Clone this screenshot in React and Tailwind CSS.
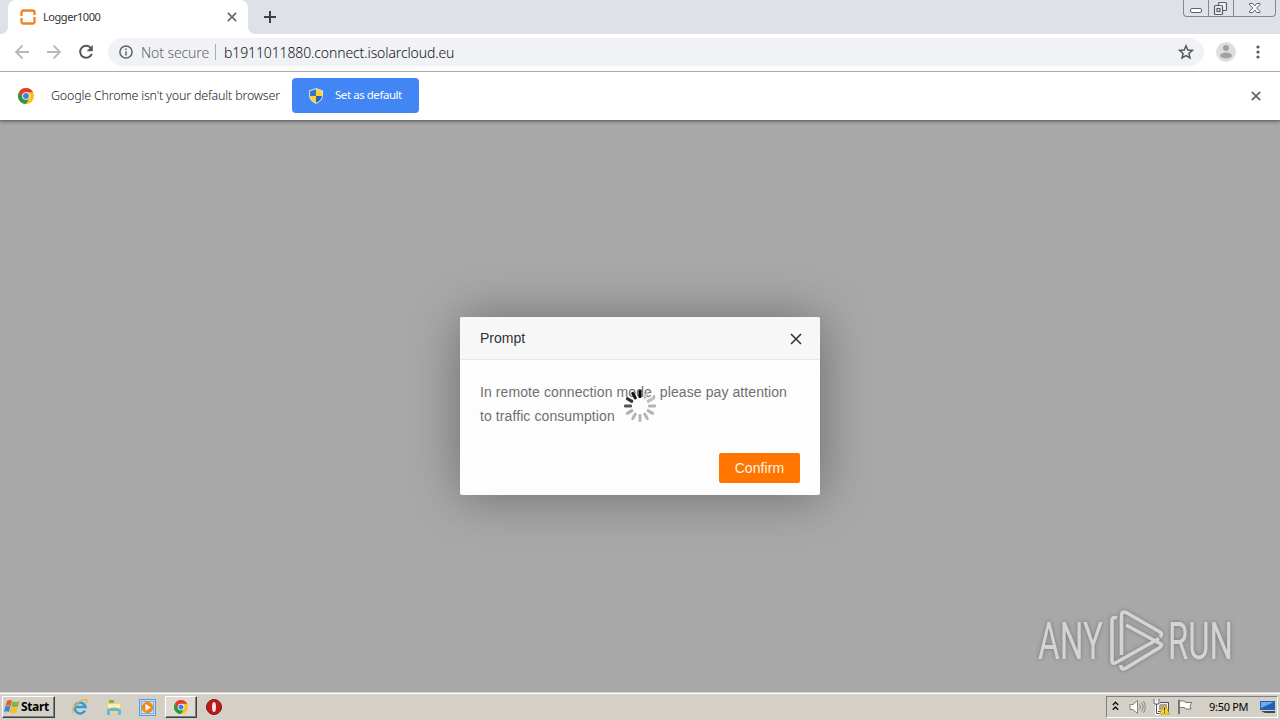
const BLADES = [
  "#050505",
  "#c9c9c9",
  "#bfbfbf",
  "#b4b4b4",
  "#b4b4b4",
  "#b4b4b4",
  "#b4b4b4",
  "#b4b4b4",
  "#b0b0b0",
  "#555555",
  "#303030",
  "#141414",
];

const ChromeLogo = ({ className = "" }) => (
  <svg viewBox="0 0 48 48" className={className}>
    <circle cx="24" cy="24" r="24" fill="#fbc116" />
    <path d="M3.200 12 A24 24 0 0 0 24 48 L34 29 L15 29Z" fill="#249a41" />
    <path d="M3.200 12 L14 30 L24 13 L45 13 A24 24 0 0 0 3.200 12Z" fill="#e33b2e" />
    <circle cx="24" cy="24" r="11.500" fill="#fff" />
    <circle cx="24" cy="24" r="8.800" fill="#3f7fe8" />
  </svg>
);

const Cross = ({ className = "", width = 2 }) => (
  <svg viewBox="0 0 12 12" fill="none" stroke="currentColor" strokeWidth={width} className={className}>
    <path d="M1 1 11 11M11 1 1 11" />
  </svg>
);

const WindowButtons = () => (
  <div className="ml-auto mr-[4px] flex h-[17px] w-[93px] rounded-b-[4px] border border-t-0 border-[#838892] bg-[#dfe2e8] text-[#5b6069]">
    <div className="w-[25px] border-r border-[#838892]">
      <svg width="24" height="16" fill="#fff" stroke="currentColor">
        <rect x="6.5" y="8.5" width="11" height="4" rx="1.5" />
      </svg>
    </div>
    <div className="w-[25px] border-r border-[#838892]">
      <svg width="24" height="16" fill="#eef0f4" stroke="currentColor" strokeWidth="1.2">
        <rect x="9.5" y="2.5" width="8" height="8" rx="1" />
        <rect x="5.5" y="5.5" width="8" height="9" rx="1" />
        <rect x="8" y="8.5" width="3" height="3" />
      </svg>
    </div>
    <svg width="41" height="16" fill="#fff" stroke="currentColor">
      <path d="M15.5 3.5h3.2l2 2.500 2-2.500h3.2v1.200L22.600 8l3.300 3.300v1.200h-3.200l-2-2.500-2 2.500h-3.200v-1.200L18.800 8l-3.300-3.300z" />
    </svg>
  </div>
);

const TabStrip = () => (
  <div className="flex h-[34px] shrink-0 items-start bg-[#dee1e6]">
    <div className="flex h-[34px] w-[8px] items-end bg-white">
      <div className="h-full w-full rounded-br-[7px] bg-[#dee1e6]" />
    </div>
    <div className="flex h-[34px] w-[240px] items-center rounded-t-[8px] bg-white pl-[12px]">
      <svg width="16" height="16" viewBox="0 0 16 16" fill="none" stroke="#ee8424" strokeWidth="2.3">
        <path d="M1.500 7V3.500Q1.500 1.500 3.500 1.500H12.500Q14.500 1.500 14.500 3.500V6" />
        <path d="M14.500 8V12.500Q14.500 14.500 12.500 14.500H3.500Q1.500 14.500 1.500 12.500V9" />
      </svg>
      <span className="ml-[7px] w-[184px] text-[11px] tracking-[-0.45px] text-[#303236]">Logger1000</span>
      <Cross className="h-[10px] w-[10px] text-[#66696d]" />
    </div>
    <div className="h-[34px] w-[8px] bg-white">
      <div className="h-full w-full rounded-bl-[7px] bg-[#dee1e6]" />
    </div>
    <svg width="12" height="12" viewBox="0 0 12 12" stroke="#3c4043" strokeWidth="2" className="mt-[11px] ml-[8px]">
      <path d="M6 0v12M0 6h12" />
    </svg>
    <WindowButtons />
  </div>
);

const Toolbar = () => (
  <div className="flex h-[38px] shrink-0 items-center border-b border-[#b5b6b8] bg-white pb-[1px] pl-[14px]">
    <svg width="16" height="16" viewBox="0 0 16 16" fill="none" stroke="#b7b9bc" strokeWidth="1.8">
      <path d="M15 8H2M8.500 1.500 2 8l6.500 6.500" />
    </svg>
    <svg width="16" height="16" viewBox="0 0 16 16" fill="none" stroke="#b7b9bc" strokeWidth="1.8" className="ml-[16px]">
      <path d="M1 8h13M7.500 1.500 14 8l-6.500 6.500" />
    </svg>
    <svg width="16" height="16" viewBox="0 0 16 16" fill="none" stroke="#55585c" strokeWidth="2" className="ml-[16px]">
      <path d="M13 4.200A6 6 0 1 0 13.800 9.800" />
      <path d="M14.800 1v6.200H8.600z" fill="#55585c" stroke="none" />
    </svg>
    <div className="ml-[14px] flex h-[28px] w-[1096px] items-center rounded-full bg-[#f0f2f5] pl-[11px]">
      <svg width="14" height="14" viewBox="0 0 14 14" fill="none" stroke="#5f6368" strokeWidth="1.500">
        <circle cx="7" cy="7" r="6.100" />
        <path d="M7 6.200V10.500M7 3.500V5" />
      </svg>
      <span className="ml-[8px] w-[67px] text-[14px] font-light tracking-[-0.1px] whitespace-nowrap text-[#5f6368]">
        Not secure
      </span>
      <span className="ml-[7px] h-[16px] w-px bg-[#a8abaf]" />
      <span className="ml-[8px] text-[14px] font-light tracking-[-0.12px] whitespace-nowrap text-[#101114]">
        b1911011880.connect.isolarcloud.eu
      </span>
      <svg width="16" height="16" viewBox="0 0 16 16" fill="none" stroke="#55595e" strokeWidth="1.500" className="mr-[10px] ml-auto">
        <path d="m8 1.800 1.800 4.200 4.600.4-3.500 3 1.100 4.500L8 11.500l-4 2.400 1.100-4.500-3.500-3 4.600-.4z" />
      </svg>
    </div>
    <svg width="20" height="20" viewBox="0 0 20 20" className="ml-[12px]">
      <circle cx="10" cy="10" r="10" fill="#dedede" />
      <circle cx="10" cy="6" r="3" fill="#a2a2a2" />
      <ellipse cx="10" cy="13.500" rx="6" ry="3" fill="#a2a2a2" />
    </svg>
    <svg width="4" height="14" viewBox="0 0 4 14" fill="#55585c" className="ml-[20px]">
      <circle cx="2" cy="2" r="1.600" />
      <circle cx="2" cy="7" r="1.600" />
      <circle cx="2" cy="12" r="1.600" />
    </svg>
  </div>
);

const DefaultBrowserBar = () => (
  <div className="relative flex h-[49px] shrink-0 items-center border-b border-[#707070] bg-white pl-[18px] shadow-[0_1px_3px_rgba(0,0,0,0.35)]">
    <ChromeLogo className="h-[16px] w-[16px]" />
    <span className="ml-[17px] w-[229px] text-[12.5px] font-light tracking-[-0.2px] whitespace-nowrap text-[#18191c]">
      Google Chrome isn't your default browser
    </span>
    <button className="mb-[1px] ml-[12px] flex h-[35px] w-[127px] items-center rounded-[4px] bg-[#4285f4] pl-[17px] text-white">
      <svg width="14" height="16" viewBox="0 0 14 16">
        <path d="M7 0 14 2.500V7Q14 13 7 16 0 13 0 7V2.500Z" fill="#d9dde0" />
        <path d="M7 1.200V8H1V3.300Z" fill="#3476c8" />
        <path d="M7 1.200V8H13V3.300Z" fill="#ffd22e" />
        <path d="M1 8H7V14.800Q1.500 12.500 1 8Z" fill="#ffd22e" />
        <path d="M13 8H7V14.800Q12.500 12.500 13 8Z" fill="#2866b5" />
      </svg>
      <span className="mb-[1px] ml-[12px] text-[11.5px] tracking-[-0.45px] whitespace-nowrap">Set as default</span>
    </button>
    <Cross className="mr-[19px] ml-auto h-[10px] w-[10px] text-[#66696d]" width={2.200} />
  </div>
);

const Spinner = () => (
  <svg viewBox="-16 -16 32 32" className="absolute top-[73px] left-[164px] h-[32px] w-[32px]">
    {BLADES.map((color, i) => (
      <rect key={i} x="-1.500" y="-16" width="3" height="8" rx="1.300" fill={color} transform={`rotate(${i * 30})`} />
    ))}
  </svg>
);

const PromptDialog = () => (
  <div className="relative mt-[196px] flex h-[178px] w-[360px] flex-col rounded-[2px] bg-[#fdfdfd] font-['Liberation_Sans',Arial,sans-serif] shadow-[1px_1px_50px_rgba(0,0,0,0.36)]">
    <div className="flex h-[43px] items-center justify-between rounded-t-[2px] border-b border-[#e9e9e9] bg-[#f7f7f7] pr-[18px] pl-[20px]">
      <h2 className="text-[14px] text-[#333]">Prompt</h2>
      <Cross className="mt-[1px] h-[12px] w-[12px] text-[#303030]" width={1.500} />
    </div>
    <p className="px-[20px] pt-[20px] text-[14px] leading-[24px] tracking-[0.09px] whitespace-nowrap text-[#6f6f6f]">
      In remote connection mode, please pay attention
      <br />
      to traffic consumption
    </p>
    <button className="mt-auto mr-[20px] mb-[12px] ml-auto h-[30px] w-[81px] rounded-[2px] bg-[#ff7500] text-[14px] tracking-[0.1px] text-[#fff3e5]">
      Confirm
    </button>
    <Spinner />
  </div>
);

const Watermark = () => (
  <svg
    width="240"
    height="80"
    viewBox="1035 600 240 80"
    className="absolute top-[479px] left-[1035px] font-['Roboto',sans-serif] font-normal drop-shadow-[0_0_2px_rgba(0,0,0,0.3)]"
  >
    <g fill="#d4d4d4" fontSize="51">
      <text x="1038" y="659" textLength="65" lengthAdjust="spacingAndGlyphs">ANY</text>
      <text x="1168" y="659" textLength="65" lengthAdjust="spacingAndGlyphs">RUN</text>
    </g>
    <g fill="none" stroke="#d4d4d4" strokeWidth="3.600" strokeLinejoin="round">
      <path d="M1117 618Q1112 616 1112 621V660Q1112 665 1117 662L1159 638.500" />
      <path d="M1121.500 655V616Q1121.500 610 1127 613L1160 632Q1163 634 1160 637" />
      <path d="M1126 625 1159 643Q1164 645 1159 648L1126 668Q1121 671 1121 665" />
    </g>
  </svg>
);

const StartButton = () => (
  <button className="flex h-[22px] w-[53px] items-center border border-[#404040] border-t-white border-l-white bg-[#d4d0c8] pl-[1px] shadow-[inset_-1px_-1px_0_#808080]">
    <svg width="16" height="16" viewBox="0 0 16 16">
      <path d="M3 2Q6 0 8 2L6.600 7Q4 5.500 1.400 7Z" fill="#e9602b" />
      <path d="M8.500 2.300Q12 4 15.500 2L14 7.500Q11 9 7.200 7.200Z" fill="#80b941" />
      <path d="M1.200 7.500Q4 6.100 6.500 7.600L5 13Q2.500 11.500 0 13Z" fill="#3c87d3" />
      <path d="M7.100 7.800Q10.500 9.500 13.800 8.100L12.300 13.500Q9 15 5.700 13.300Z" fill="#f7bd24" />
    </svg>
    <span className="ml-px text-[12px] font-bold tracking-[-0.35px] text-black">Start</span>
  </button>
);

const QuickLaunch = () => (
  <>
    <svg width="18" height="18" viewBox="0 0 18 18" fill="none" className="ml-[16px]">
      <path d="M14 12.500A5.500 5.500 0 1 1 14.500 9H5" stroke="#319bd9" strokeWidth="2.600" />
      <path d="M2 15.500C-2 12 9 1.500 14 1.500c3 0 2 3 1 4" stroke="#e5b93c" strokeWidth="1.300" />
    </svg>
    <svg width="16" height="17" viewBox="0 0 16 17" className="ml-[17px]">
      <path d="M1 2h5l1 2h8v11H1Z" fill="#ecd37d" />
      <path d="M3 1h5v3H3Z" fill="#75b75a" />
      <path d="M2 5h12v5H2Z" fill="#fff0ae" />
      <path d="M1 10q7-3 14 0v6h-3v-4H4v4H1Z" fill="#65b9dc" />
    </svg>
    <svg width="17" height="17" viewBox="0 0 17 17" className="ml-[17px]">
      <rect x=".5" y=".5" width="16" height="16" fill="#c0def4" stroke="#5b9bd0" />
      <rect x="2.500" y="2.500" width="12" height="12" fill="#d7eafa" stroke="#79aed8" />
      <circle cx="8.500" cy="8.500" r="5.700" fill="#f48718" />
      <path d="m6.500 5 5.500 3.500-5.500 3.500z" fill="#fff" />
    </svg>
    <div className="ml-[9px] flex h-[22px] w-[32px] items-center justify-center border border-[#404040] border-t-white border-l-white bg-[#dedbd5] shadow-[inset_-1px_-1px_0_#808080]">
      <ChromeLogo className="h-[14px] w-[14px]" />
    </div>
    <svg width="16" height="16" viewBox="0 0 16 16" className="ml-[9px]">
      <circle cx="8" cy="8" r="7.500" fill="#bd1919" stroke="#821616" />
      <ellipse cx="8" cy="8" rx="2" ry="5" fill="#f2e5e2" />
    </svg>
  </>
);

const SystemTray = () => (
  <div className="mr-[2px] ml-auto flex h-[22px] w-[172px] items-center border border-[#808080] border-r-white border-b-white pl-[5px]">
    <svg width="7" height="10" viewBox="0 0 7 10" fill="none" stroke="#111" strokeWidth="1.400" className="mb-[2px]">
      <path d="M.8 4 3.500 1.300 6.200 4M.8 8.700 3.500 6l2.700 2.700" />
    </svg>
    <svg width="17" height="16" viewBox="0 0 17 16" className="ml-[10px]" fill="none" stroke="#858585">
      <path d="M1 5.500h3L8.500 1.500v13L4 10.500H1Z" fill="#fff" />
      <path d="M10.500 5.500q2 2.500 0 5M12.500 3.500q3.300 4.500 0 9M14.500 2q3.500 6 0 12" />
    </svg>
    <svg width="17" height="16" viewBox="0 0 17 16" className="ml-[7px]">
      <rect x="4.500" y="3.500" width="11" height="9" fill="#eee" stroke="#555" />
      <path d="M6 5h8v6H6z" fill="#aaa69e" />
      <path d="M1.500.5v4h4v-4M3.500 4.500v10h4" fill="none" stroke="#fff" strokeWidth="3" />
      <path d="M1 0v5h5V0M3.500 5v9.500h5" fill="none" stroke="#555" />
      <path d="m11.500 5.500 5 9.500h-10z" fill="#ffd928" stroke="#b69017" strokeWidth=".7" />
      <path d="M11.500 8.500v3M11.500 12.500v1.300" stroke="#222" />
    </svg>
    <svg width="17" height="16" viewBox="0 0 17 16" className="ml-[7px]" fill="#fff" stroke="#777">
      <path d="M1.500 1v14h1V1zM2.500 2h5l1 1.500h6.500L13 7l1 3H8.500l-1-1.500h-5z" />
    </svg>
    <span className="ml-[15px] text-[11px] tracking-[-0.29px] whitespace-nowrap text-black">9:50 PM</span>
    <svg width="16" height="14" viewBox="0 0 16 14" className="mr-[1px] ml-auto">
      <path d="M0 1h15v9H0z" fill="#2262b5" />
      <path d="M1 2h13L1 8z" fill="#72a9e3" />
      <path d="M1 11h14v2H5z" fill="#39465b" />
    </svg>
  </div>
);

const Taskbar = () => (
  <div className="h-[28px] shrink-0 border-t border-[#d4d0c8] bg-[#d4d0c8]">
    <div className="flex h-[27px] items-center border-t border-white pl-[2px]">
      <StartButton />
      <QuickLaunch />
      <SystemTray />
    </div>
  </div>
);

const App = () => (
  <div className="flex h-[720px] w-[1280px] flex-col overflow-hidden bg-[#a8a8a8] font-['Noto_Sans',sans-serif]">
    <TabStrip />
    <Toolbar />
    <DefaultBrowserBar />
    <main className="relative flex flex-1 items-start justify-center">
      <PromptDialog />
      <Watermark />
    </main>
    <Taskbar />
  </div>
);

export default App;
